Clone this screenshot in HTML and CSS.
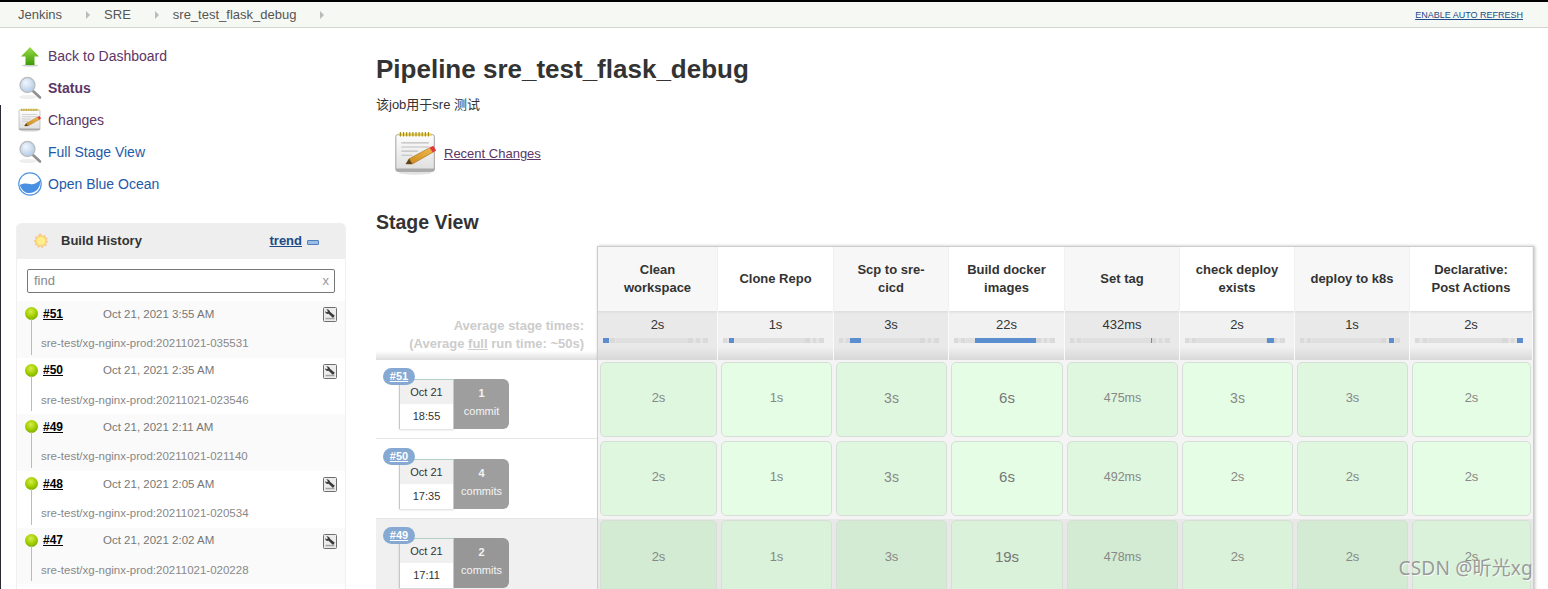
FILE: index.html
```html
<!DOCTYPE html>
<html lang="en">
<head>
<meta charset="utf-8">
<title>sre_test_flask_debug - Jenkins</title>
<link rel="stylesheet" href="styles.css">
</head>
<body>
<svg class="defs" aria-hidden="true">
  <defs>
    <linearGradient id="g-arrow" x1="0" y1="0" x2="0" y2="1"><stop offset="0" stop-color="#9bdc4a"/><stop offset="1" stop-color="#3f9a08"/></linearGradient>
    <radialGradient id="g-lens" cx=".4" cy=".35" r=".8"><stop offset="0" stop-color="#f1f6fc"/><stop offset="1" stop-color="#a6c3e4"/></radialGradient>
    <linearGradient id="g-paper" x1="0" y1="0" x2="0" y2="1"><stop offset="0" stop-color="#fdfdfd"/><stop offset="1" stop-color="#dedede"/></linearGradient>
    <linearGradient id="g-pencil" x1="0" y1="1" x2="1" y2="0"><stop offset="0" stop-color="#c98a1e"/><stop offset="1" stop-color="#f2b84b"/></linearGradient>
    <symbol id="i-arrow" viewBox="0 0 24 24"><ellipse cx="12" cy="21.500" rx="8" ry="1" fill="#ccc"/><path d="M12 3 21 12.500H16.500V21H7.500V12.500H3Z" fill="url(#g-arrow)"/></symbol>
    <symbol id="i-search" viewBox="0 0 24 24"><ellipse cx="10" cy="21" rx="9" ry="2" fill="#eee"/><path d="M15 15 22 21.500" stroke="#8f8f8f" stroke-width="2.600" stroke-linecap="round"/><circle cx="9.500" cy="9" r="7.400" fill="url(#g-lens)" stroke="#bcbfc1" stroke-width="1.500"/></symbol>
    <symbol id="i-notes" viewBox="0 0 24 24"><ellipse cx="11.500" cy="22.800" rx="9" ry="1" fill="#e2e2e2"/><rect x="1" y="2" width="21" height="20" rx="1" fill="url(#g-paper)" stroke="#9a9a9a" stroke-width=".5"/><path d="M1 20.500H22V21.200Q22 22 21 22H2Q1 22 1 21.200Z" fill="#aaa"/><rect x="2.500" y="1.300" width="18" height="1.300" fill="#e6cf5e"/><path d="M3.500.6V3M5.200.6V3M6.900.6V3M8.600.6V3M10.300.6V3M12 .6V3M13.700.6V3M15.400.6V3M17.100.6V3M18.800.6V3" stroke="#a58a14" stroke-width=".6"/><path d="M4 6.500h15M4 8.700h15M4 11h9M4 13.200h6" stroke="#bdbdbd" stroke-width=".6"/><path d="M6.500 18 8.200 15.200 20 8.800 21.500 11.400 10 18Z" fill="url(#g-pencil)" stroke="#9a6d16" stroke-width=".3"/><path d="M19.400 9.100 21.400 8 23 10.600 21.200 11.700Z" fill="#e2383c"/><path d="M6.500 18 8.200 15.200 10 18Z" fill="#5a4522"/></symbol>
    <symbol id="i-ocean" viewBox="0 0 24 24"><circle cx="12" cy="12" r="11.200" fill="#fff" stroke="#4a90e2" stroke-width="1.200"/><path d="M1.800 13C6 10.800 9 11.300 12 12 15.500 12.800 18.500 11.300 21.800 8.500 22.600 11 22 15 19 18 15 22 8 22 5 18.500 3.700 17 2.400 15 1.800 13Z" fill="#4a90e2"/></symbol>
    <symbol id="i-sun" viewBox="0 0 16 16"><path d="M8 .5 9.500 3 12.500 1.800 12.500 4.500 15 4.800 13.500 7.300 15.500 9 13 10.300 13.800 13 10.800 12.800 9.500 15.500 7.500 13.500 4.500 14.800 4.300 12 1.500 12.300 2.500 9.700.5 8 2.700 6.300 1.800 3.500 4.800 3.500 5.800 1Z" fill="#fbc98a"/><circle cx="8" cy="8" r="4.600" fill="#fdf08c" stroke="#f6d765" stroke-width=".6"/></symbol>
    <symbol id="i-wrench" viewBox="0 0 14 15"><rect x=".5" y=".5" width="13" height="14" rx="1" fill="#ececec" stroke="#6e6e6e"/><path d="M3.300 2.300C5 2 6.800 3 7 4.800L11.800 8.800 10 11 5.500 6.800C3.800 7.200 2 6 2 4.200L3.800 5.300 5 4.300Z" fill="#3c3c3c"/><path d="M2.500 10.800H11.500V12.300H2.500Z" fill="#a4a4a4"/></symbol>
  </defs>
</svg>

<header class="topbar">
  <nav class="crumbs">
    <a class="crumb crumb-first">Jenkins</a><span class="crumb-arrow"></span>
    <a class="crumb">SRE</a><span class="crumb-arrow"></span>
    <a class="crumb">sre_test_flask_debug</a><span class="crumb-arrow"></span>
  </nav>
  <a class="refresh" href="#">ENABLE AUTO REFRESH</a>
</header>

<div class="layout">
  <aside class="side">
    <ul class="tasks">
      <li class="task"><svg class="task-icon"><use href="#i-arrow"/></svg><a class="visited">Back to Dashboard</a></li>
      <li class="task"><svg class="task-icon"><use href="#i-search"/></svg><a class="visited strong">Status</a></li>
      <li class="task"><svg class="task-icon"><use href="#i-notes"/></svg><a class="visited">Changes</a></li>
      <li class="task"><svg class="task-icon"><use href="#i-search"/></svg><a class="fresh">Full Stage View</a></li>
      <li class="task"><svg class="task-icon"><use href="#i-ocean"/></svg><a class="fresh">Open Blue Ocean</a></li>
    </ul>

    <section class="history">
      <div class="history-head">
        <svg class="sun"><use href="#i-sun"/></svg>
        <span class="history-title">Build History</span>
        <a class="trend" href="#">trend</a>
        <span class="collapse"></span>
      </div>
      <div class="search"><div class="search-box"><span>find</span><span class="search-x">x</span></div></div>

      <div class="build">
        <div class="build-top"><span class="ball"></span><a class="build-no" href="#">#51</a><span class="build-date">Oct 21, 2021 3:55 AM</span><svg class="wrench"><use href="#i-wrench"/></svg></div>
        <div class="build-desc">sre-test/xg-nginx-prod:20211021-035531</div>
      </div>
      <div class="build">
        <div class="build-top"><span class="ball"></span><a class="build-no" href="#">#50</a><span class="build-date">Oct 21, 2021 2:35 AM</span><svg class="wrench"><use href="#i-wrench"/></svg></div>
        <div class="build-desc">sre-test/xg-nginx-prod:20211021-023546</div>
      </div>
      <div class="build">
        <div class="build-top"><span class="ball"></span><a class="build-no" href="#">#49</a><span class="build-date">Oct 21, 2021 2:11 AM</span></div>
        <div class="build-desc">sre-test/xg-nginx-prod:20211021-021140</div>
      </div>
      <div class="build">
        <div class="build-top"><span class="ball"></span><a class="build-no" href="#">#48</a><span class="build-date">Oct 21, 2021 2:05 AM</span><svg class="wrench"><use href="#i-wrench"/></svg></div>
        <div class="build-desc">sre-test/xg-nginx-prod:20211021-020534</div>
      </div>
      <div class="build">
        <div class="build-top"><span class="ball"></span><a class="build-no" href="#">#47</a><span class="build-date">Oct 21, 2021 2:02 AM</span><svg class="wrench"><use href="#i-wrench"/></svg></div>
        <div class="build-desc">sre-test/xg-nginx-prod:20211021-020228</div>
      </div>
    </section>
  </aside>

  <main class="main">
    <h1 class="title">Pipeline sre_test_flask_debug</h1>
    <p class="desc">该job用于sre 测试</p>
    <div class="recent">
      <svg class="recent-icon"><use href="#i-notes"/></svg>
      <a class="recent-link" href="#">Recent Changes</a>
    </div>
    <h2 class="stage-title">Stage View</h2>

    <div class="stage">
      <div class="runs">
        <div class="runs-spacer"></div>
        <div class="runs-avg">Average stage times:<br>(Average <u>full</u> run time: ~50s)</div>

        <div class="run">
          <a class="run-badge" href="#">#51</a>
          <div class="run-card">
            <div class="run-date"><span class="run-day">Oct 21</span><span class="run-time">18:55</span></div>
            <div class="run-commits"><b>1</b><span>commit</span></div>
          </div>
        </div>
        <div class="run">
          <a class="run-badge" href="#">#50</a>
          <div class="run-card">
            <div class="run-date"><span class="run-day">Oct 21</span><span class="run-time">17:35</span></div>
            <div class="run-commits"><b>4</b><span>commits</span></div>
          </div>
        </div>
        <div class="run alt">
          <a class="run-badge" href="#">#49</a>
          <div class="run-card">
            <div class="run-date"><span class="run-day">Oct 21</span><span class="run-time">17:11</span></div>
            <div class="run-commits"><b>2</b><span>commits</span></div>
          </div>
        </div>
      </div>

      <div class="table">
        <div class="t-row t-head">
          <div class="th">Clean workspace</div>
          <div class="th">Clone Repo</div>
          <div class="th">Scp to sre-cicd</div>
          <div class="th">Build docker images</div>
          <div class="th">Set tag</div>
          <div class="th">check deploy exists</div>
          <div class="th">deploy to k8s</div>
          <div class="th">Declarative: Post Actions</div>
        </div>
        <div class="t-row t-avg">
          <div class="avg">2s<div class="bar"><i class="mark" style="left:0;width:6%"></i></div></div>
          <div class="avg">1s<div class="bar"><i class="mark" style="left:6%;width:5%"></i></div></div>
          <div class="avg">3s<div class="bar"><i class="mark" style="left:11%;width:11%"></i></div></div>
          <div class="avg">22s<div class="bar"><i class="mark" style="left:21%;width:60%"></i></div></div>
          <div class="avg">432ms<div class="bar"><i class="mark" style="left:81%;width:1%"></i></div></div>
          <div class="avg">2s<div class="bar"><i class="mark" style="left:82%;width:7%"></i></div></div>
          <div class="avg">1s<div class="bar"><i class="mark" style="left:89%;width:5%"></i></div></div>
          <div class="avg">2s<div class="bar"><i class="mark" style="left:94%;width:6%"></i></div></div>
        </div>
        <div class="t-row t-run">
          <div class="cell"><div class="box">2s</div></div>
          <div class="cell"><div class="box">1s</div></div>
          <div class="cell"><div class="box size-l">3s</div></div>
          <div class="cell"><div class="box size-xl">6s</div></div>
          <div class="cell"><div class="box size-s">475ms</div></div>
          <div class="cell"><div class="box size-l">3s</div></div>
          <div class="cell"><div class="box">3s</div></div>
          <div class="cell"><div class="box">2s</div></div>
        </div>
        <div class="t-row t-run">
          <div class="cell"><div class="box">2s</div></div>
          <div class="cell"><div class="box">1s</div></div>
          <div class="cell"><div class="box size-l">3s</div></div>
          <div class="cell"><div class="box size-xl">6s</div></div>
          <div class="cell"><div class="box size-s">492ms</div></div>
          <div class="cell"><div class="box">2s</div></div>
          <div class="cell"><div class="box">2s</div></div>
          <div class="cell"><div class="box">2s</div></div>
        </div>
        <div class="t-row t-run alt">
          <div class="cell"><div class="box">2s</div></div>
          <div class="cell"><div class="box">1s</div></div>
          <div class="cell"><div class="box">3s</div></div>
          <div class="cell"><div class="box size-xl">19s</div></div>
          <div class="cell"><div class="box size-s">478ms</div></div>
          <div class="cell"><div class="box">2s</div></div>
          <div class="cell"><div class="box">2s</div></div>
          <div class="cell"><div class="box">2s</div></div>
        </div>
      </div>
    </div>
  </main>
</div>

<div class="watermark">CSDN @昕光xg</div>
</body>
</html>
```

FILE: styles.css
```css
* { box-sizing: border-box; }
html, body { height: 589px; overflow: hidden; }
body {
  margin: 0;
  position: relative;
  background: #fff;
  color: #333;
  font: 13px/18px "Liberation Sans", "Noto Sans CJK SC", sans-serif;
}
body::before {
  content: "";
  position: absolute;
  left: 0;
  top: 105px;
  bottom: 0;
  width: 1px;
  background: #2a2a33;
}
a { cursor: pointer; }
.defs { display: block; width: 0; height: 0; }

/* top bar */
.topbar {
  height: 28px;
  display: flex;
  align-items: center;
  justify-content: space-between;
  padding-right: 25px;
  background: #f6f9f3;
  border-top: 2px solid #000;
  border-bottom: 1px solid #d3d7cf;
}
.crumbs { display: flex; align-items: center; }
.crumb { margin-left: 14px; color: #555; font-size: 13px; }
.crumb-first { margin-left: 18px; }
.crumb-arrow {
  width: 0;
  height: 0;
  margin-left: 24px;
  border-left: 4px solid #bbb;
  border-top: 4px solid transparent;
  border-bottom: 4px solid transparent;
}
.refresh { color: #204a87; font-size: 9px; text-decoration: underline; }

/* layout */
.layout { display: flex; }
.side { width: 346px; flex: none; padding: 12px 0 0 16px; }
.main { width: 1158px; flex: none; margin-left: 30px; }

/* tasks */
.tasks { list-style: none; margin: 0 0 23px; padding: 0; }
.task { height: 32px; display: flex; align-items: center; font-size: 14px; }
.task-icon { width: 24px; height: 24px; margin: 0 6px 0 2px; flex: none; }
.visited { color: #5c3566; }
.fresh { color: #1f5aa8; }
.strong { font-weight: bold; }

/* build history */
.history { border: 1px solid #f0f0f0; border-top: 0; border-radius: 5px 5px 0 0; padding-bottom: 30px; }
.history-head {
  height: 36px;
  display: flex;
  align-items: center;
  background: #eee;
  border-radius: 5px 5px 0 0;
  padding-left: 16px;
}
.sun { width: 16px; height: 16px; flex: none; }
.history-title { margin-left: 12px; font-weight: bold; color: #333; }
.trend { margin-left: auto; font-weight: bold; color: #204a87; text-decoration: underline; }
.collapse {
  width: 12px;
  height: 5px;
  margin: 2px 26px 0 5px;
  background: #9bbde6;
  border: 1px solid #4f7fc0;
  border-radius: 1px;
}
.search { height: 42px; padding: 10px 10px 8px; }
.search-box {
  height: 24px;
  display: flex;
  justify-content: space-between;
  align-items: center;
  padding: 0 5px 0 6px;
  border: 1px solid #777;
  border-radius: 2px;
  color: #888;
  font-size: 13px;
}
.search-x { color: #999; }
.build { height: 56.7px; padding: 5.5px 8px 0 8px; background: #fff; position: relative; }
.build:nth-child(odd) { background: #fafafa; }
.build::before {
  content: "";
  position: absolute;
  left: 14px;
  top: 18px;
  bottom: 3px;
  width: 1px;
  background: #bbb;
}
.build-top { display: flex; align-items: center; height: 14px; }
.ball {
  width: 13px;
  height: 13px;
  flex: none;
  border-radius: 50%;
  background: radial-gradient(circle at 45% 35%, #d6ec4f 0, #a4d000 45%, #5f9200 100%);
}
.build-no { margin-left: 5px; width: 60px; color: #000; font-weight: bold; font-size: 12px; text-decoration: underline; }
.build-date { color: #777; font-size: 11.5px; }
.wrench { width: 14px; height: 15px; margin: 2px 0 0 auto; flex: none; }
.build-desc { margin: 14.5px 0 0 16px; color: #888; font-size: 11.5px; line-height: 16px; }

/* main */
.title { margin: 26px 0 0; font-size: 26px; line-height: 30px; font-weight: bold; color: #333; }
.desc { margin: 12px 0 0; line-height: 18px; font-size: 13px; }
.recent { display: flex; align-items: center; height: 44px; margin: 17px 0 0 18px; }
.recent-icon { width: 44px; height: 44px; flex: none; margin-right: 6px; }
.recent-link { margin-top: 2px; color: #5c3566; text-decoration: underline; }
.stage-title { margin: 35px 0 12px; font-size: 19.5px; line-height: 24px; font-weight: bold; color: #333; }

/* stage view */
.stage { display: flex; }
.runs { width: 221px; flex: none; }
.runs-spacer { height: 65px; }
.runs-avg {
  height: 49px;
  padding: 6px 13px 0 0;
  text-align: right;
  font-weight: bold;
  color: #ccc;
  background: linear-gradient(to bottom, #fff 0, #fff 40px, #ddd 100%);
}
.run {
  height: 79.4px;
  position: relative;
  padding: 19.2px 0 0 23px;
  border-bottom: 1px solid #e6e6e6;
  background: #fff;
}
.run.alt { background: #f0f0f0; }
.run-badge {
  position: absolute;
  left: 7px;
  top: 8.4px;
  width: 32px;
  height: 17px;
  z-index: 1;
  border-radius: 9px;
  background: #85a9d2;
  color: #fff;
  font-size: 11px;
  font-weight: bold;
  line-height: 16px;
  text-align: center;
  text-decoration: underline;
}
.run-card { display: flex; height: 50px; width: 110px; }
.run-date {
  width: 55px;
  display: flex;
  flex-direction: column;
  border: 1px solid #b4d2c4;
  box-shadow: 0 1px 2px rgba(0, 0, 0, .15);
  text-align: center;
  color: #333;
  font-size: 11px;
}
.run-day { height: 24px; line-height: 24px; background: #f0f0f0; }
.run-time { flex: 1; line-height: 25px; background: #fff; }
.run-commits {
  width: 55px;
  display: flex;
  flex-direction: column;
  align-items: center;
  padding-top: 5px;
  background: #9e9e9e;
  border-radius: 0 6px 6px 0;
  color: #f4f4f4;
  font-size: 11px;
}
.alt .run-commits { background: #979797; }

.table {
  width: 937px;
  flex: none;
  border: 1px solid #ccc;
  border-bottom: 0;
  box-shadow: 1px 0 3px rgba(0, 0, 0, .25);
  background: #f4f4f4;
}
.t-row { display: grid; grid-template-columns: 120px 116px 115px 116px 115px 115px 115px 123px; }
.t-head { height: 64px; }
.th {
  display: flex;
  align-items: center;
  justify-content: center;
  padding: 0 14px 1px;
  text-align: center;
  font-weight: bold;
  color: #333;
  background: #fff;
  border-right: 1px solid #f0f0f0;
}
.th:nth-child(odd) { background: #f7f7f7; }
.t-avg { height: 49px; }
.avg {
  padding-top: 5px;
  text-align: center;
  color: #333;
  border-right: 1px solid #fafafa;
  background: linear-gradient(to bottom, #ddd 0, #f1f1f1 3px, #f1f1f1 36px, #d8d8d8 100%);
}
.avg:nth-child(odd) { background: linear-gradient(to bottom, #ddd 0, #e9e9e9 3px, #e9e9e9 36px, #d8d8d8 100%); }
.bar {
  height: 5px;
  margin: 4px 9px 0 5px;
  position: relative;
  background: linear-gradient(to right, #dadada 0 4%, #e4e4e4 4% 7%, #dadada 7% 11%, #e4e4e4 11% 12%, #dfdfdf 12% 81%, #d8d8d8 81% 86%, #e4e4e4 86% 89%, #dadada 89% 92%, #e4e4e4 92% 95%, #dadada 95% 100%);
}
.mark { position: absolute; top: 0; bottom: 0; background: #5b8ecf; }
.t-run { height: 79.4px; }
.cell { padding: 1.6px 2px 0; }
.cell:first-child { padding-right: 1px; }
.cell:nth-child(2) { padding-left: 3px; }
.box {
  height: 75px;
  display: flex;
  align-items: center;
  justify-content: center;
  padding-bottom: 2px;
  border: 1px solid #d6dfd6;
  border-radius: 5px;
  background: #e5fde5;
  color: #888;
  font-size: 13px;
}
.cell:nth-child(odd) .box { background: #dff7df; }
.t-run.alt { background: #e8e8e8; }
.t-run.alt .box { background: #d9f2d9; }
.t-run.alt .cell:nth-child(odd) .box { background: #d2ebd2; }
.size-s { font-size: 12.5px; }
.size-l { font-size: 14px; }
.size-xl { font-size: 15px; color: #777; }

/* watermark */
.watermark {
  position: absolute;
  right: 15px;
  top: 555px;
  color: #9a9a9a;
  font: 19px/26px "Noto Sans", "Noto Sans CJK SC", sans-serif;
  letter-spacing: .2px;
  text-shadow: 1px 1px 1px rgba(255, 255, 255, .8);
}
```
